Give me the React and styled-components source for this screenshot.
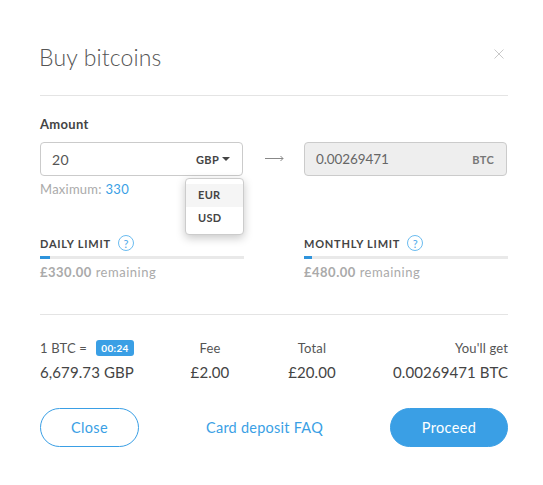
import React from "react";
import styled, { createGlobalStyle } from "styled-components";

const blue = "#3a9fe5";

const GlobalStyle = createGlobalStyle`
  html, body {
    margin: 0;
    background: #fff;
    font-family: "Lato", "Open Sans", sans-serif;
  }
  * { box-sizing: border-box; }
`;

const Modal = styled.div`
  width: 543px;
  height: 485px;
  padding: 0 35px 0 40px;
  background: #fff;
  color: #444;
`;

const Header = styled.header`
  height: 96px;
  display: flex;
  justify-content: space-between;
  border-bottom: 1px solid #e4e4e4;
  padding-top: 41px;
`;

const Title = styled.h1`
  margin: 0 0 0 -1px;
  font-size: 23px;
  line-height: 32px;
  font-weight: 300;
  color: #555;
  letter-spacing: 0.15px;
`;

const CloseIcon = styled.svg`
  width: 10px;
  height: 10px;
  margin: 8px 4px 0 0;
  stroke: #c9c9c9;
  stroke-width: 1;
  fill: none;
`;

const Label = styled.div`
  margin-top: 19px;
  font-size: 13px;
  line-height: 18px;
  font-weight: 700;
  color: #444;
  letter-spacing: 0.3px;
`;

const ConvertRow = styled.div`
  margin-top: 9px;
  display: flex;
  align-items: center;
`;

const AmountWrap = styled.div`
  position: relative;
  width: 203px;
`;

const Field = styled.div`
  width: 203px;
  height: 34px;
  display: flex;
  align-items: center;
  justify-content: space-between;
  padding: 0 12px 0 11px;
  border: 1px solid #cbcbcb;
  border-radius: 4px;
  font-size: 14px;
  color: ${(p) => (p.$disabled ? "#666" : "#555")};
  background: ${(p) => (p.$disabled ? "#eeeeee" : "#fff")};
`;

const FieldValue = styled.span`
  font-size: ${(p) => (p.$disabled ? "13.5px" : "14px")};
  letter-spacing: ${(p) => (p.$disabled ? "-0.1px" : "0.4px")};
`;

const Currency = styled.span`
  display: inline-flex;
  align-items: center;
  gap: 3px;
  font-size: 11px;
  font-weight: 700;
  letter-spacing: 0.3px;
  color: ${(p) => (p.$disabled ? "#777" : "#444")};
`;

const Caret = styled.i`
  width: 0;
  height: 0;
  border-left: 4px solid transparent;
  border-right: 4px solid transparent;
  border-top: 4px solid #444;
`;

const Menu = styled.ul`
  position: absolute;
  top: 36px;
  left: 145px;
  width: 59px;
  height: 57px;
  margin: 0;
  padding: 5px 0;
  list-style: none;
  background: #fff;
  border: 1px solid #ccc;
  border-radius: 4px;
  box-shadow: 0 3px 10px rgba(0, 0, 0, 0.22);
`;

const MenuItem = styled.li`
  height: 23px;
  line-height: 22px;
  padding-left: 12px;
  font-size: 11px;
  font-weight: 700;
  letter-spacing: 0.3px;
  color: #444;
  background: ${(p) => (p.$active ? "#f5f5f5" : "transparent")};
`;

const ArrowIcon = styled.svg`
  width: 19px;
  height: 8px;
  margin: 0 20px 0 22px;
  stroke: #888;
  stroke-width: 1;
  fill: none;
`;

const Maximum = styled.div`
  margin-top: 4px;
  font-size: 13px;
  line-height: 18px;
  color: #aaa;
  letter-spacing: 0.25px;
  a {
    color: ${blue};
    letter-spacing: 0.4px;
  }
`;

const Limits = styled.div`
  margin-top: 35px;
  display: grid;
  grid-template-columns: 204px 204px;
  column-gap: 60px;
`;

const LimitHead = styled.div`
  height: 20px;
  display: flex;
  align-items: center;
  gap: 7px;
  font-size: 11px;
  font-weight: 700;
  letter-spacing: 0.78px;
  color: #444;
`;

const HelpIcon = styled.span`
  width: 16px;
  height: 16px;
  display: inline-flex;
  align-items: center;
  justify-content: center;
  border: 1px solid #6bbcf0;
  border-radius: 50%;
  font-size: 11px;
  font-weight: 400;
  color: #4fa9ea;
  letter-spacing: 0;
`;

const Track = styled.div`
  margin-top: 3px;
  height: 3px;
  background: #e9e9e9;
`;

const Fill = styled.div`
  height: 3px;
  background: #2f94dc;
`;

const Remaining = styled.div`
  margin-top: 4px;
  font-size: 13px;
  line-height: 18px;
  color: #aaa;
  letter-spacing: 0.5px;
  b {
    font-weight: 700;
  }
`;

const Divider = styled.hr`
  margin: 33px 0 0;
  border: 0;
  border-top: 1px solid #e4e4e4;
`;

const Summary = styled.div`
  margin-top: 23px;
  display: grid;
  grid-template-columns: 125px 90px 114px 139px;
  color: #444;
`;

const Cell = styled.div`
  text-align: ${(p) => p.$align || "center"};
  white-space: nowrap;
`;

const CellLabel = styled.div`
  height: 20px;
  line-height: 20px;
  font-size: 13px;
  letter-spacing: 0.15px;
  color: #555;
  display: flex;
  align-items: center;
  justify-content: ${(p) => p.$justify || "center"};
`;

const Timer = styled.span`
  margin-left: 9px;
  width: 38px;
  height: 16px;
  line-height: 16px;
  text-align: center;
  border-radius: 3px;
  background: ${blue};
  color: #fff;
  font-size: 10px;
  font-weight: 700;
  letter-spacing: 0.3px;
`;

const CellValue = styled.div`
  margin-top: 3px;
  font-size: 15px;
  line-height: 22px;
  letter-spacing: 0.1px;
  color: #444;
`;

const Actions = styled.div`
  margin-top: 25px;
  display: flex;
  align-items: center;
  justify-content: space-between;
`;

const Button = styled.button`
  height: 39px;
  width: ${(p) => (p.$primary ? "118px" : "99px")};
  border: 1px solid ${blue};
  border-radius: 20px;
  background: ${(p) => (p.$primary ? blue : "#fff")};
  color: ${(p) => (p.$primary ? "#fff" : blue)};
  font-family: inherit;
  font-size: 14.5px;
  letter-spacing: 0.35px;
  padding: 0;
`;

const FaqLink = styled.a`
  color: ${blue};
  font-size: 14.5px;
  letter-spacing: 0.25px;
`;

const Limit = ({ title, percent, amount }) => (
  <div>
    <LimitHead>
      {title}
      <HelpIcon>?</HelpIcon>
    </LimitHead>
    <Track>
      <Fill style={{ width: `${percent}%` }} />
    </Track>
    <Remaining>
      <b>{amount}</b> remaining
    </Remaining>
  </div>
);

const App = () => {
  return (
    <Modal>
      <GlobalStyle />
      <Header>
        <Title>Buy bitcoins</Title>
        <CloseIcon viewBox="0 0 10 10">
          <path d="M0.5 0.5L9.5 9.5M9.5 0.5L0.5 9.5" />
        </CloseIcon>
      </Header>

      <Label>Amount</Label>
      <ConvertRow>
        <AmountWrap>
          <Field>
            <FieldValue>20</FieldValue>
            <Currency>
              GBP <Caret />
            </Currency>
          </Field>
          <Menu>
            <MenuItem $active>EUR</MenuItem>
            <MenuItem>USD</MenuItem>
          </Menu>
        </AmountWrap>
        <ArrowIcon viewBox="0 0 19 8">
          <path d="M0 3.5H18M15.5 1L18 3.5L15.5 6" />
        </ArrowIcon>
        <Field $disabled>
          <FieldValue $disabled>0.00269471</FieldValue>
          <Currency $disabled>BTC</Currency>
        </Field>
      </ConvertRow>
      <Maximum>
        Maximum: <a>330</a>
      </Maximum>

      <Limits>
        <Limit title="DAILY LIMIT" percent={5} amount="£330.00" />
        <Limit title="MONTHLY LIMIT" percent={4} amount="£480.00" />
      </Limits>

      <Divider />

      <Summary>
        <Cell $align="left">
          <CellLabel $justify="flex-start">
            1 BTC = <Timer>00:24</Timer>
          </CellLabel>
          <CellValue>6,679.73 GBP</CellValue>
        </Cell>
        <Cell>
          <CellLabel>Fee</CellLabel>
          <CellValue>£2.00</CellValue>
        </Cell>
        <Cell>
          <CellLabel>Total</CellLabel>
          <CellValue>£20.00</CellValue>
        </Cell>
        <Cell $align="right">
          <CellLabel $justify="flex-end">You'll get</CellLabel>
          <CellValue>0.00269471 BTC</CellValue>
        </Cell>
      </Summary>

      <Actions>
        <Button>Close</Button>
        <FaqLink>Card deposit FAQ</FaqLink>
        <Button $primary>Proceed</Button>
      </Actions>
    </Modal>
  );
};

export default App;
